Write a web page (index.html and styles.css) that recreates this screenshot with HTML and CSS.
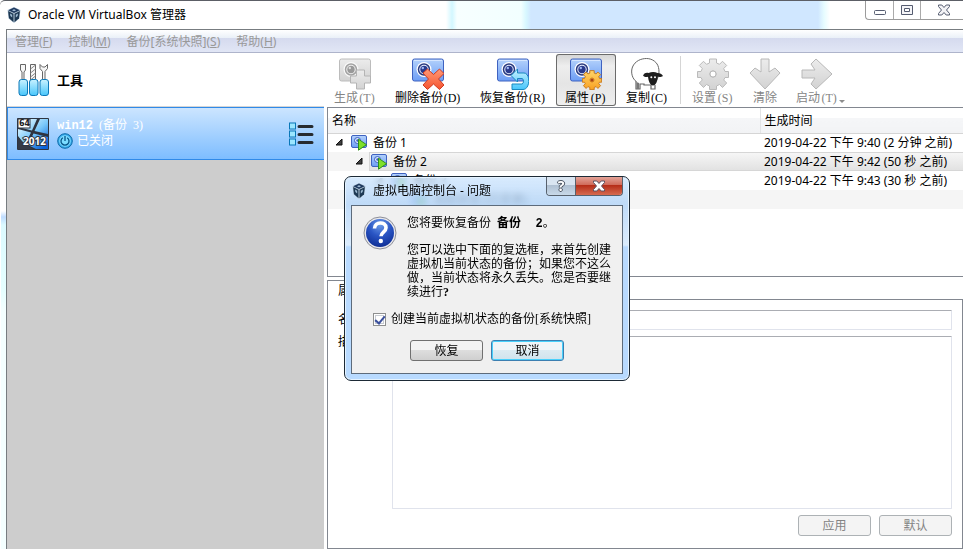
FILE: index.html
```html
<!DOCTYPE html>
<html lang="zh-CN">
<head>
<meta charset="utf-8">
<title>Oracle VM VirtualBox 管理器</title>
<link rel="stylesheet" href="styles.css">
</head>
<body>
<svg class="defs" width="0" height="0" aria-hidden="true">
  <defs>
    <linearGradient id="g-blue" x1="0" y1="0" x2="0" y2="1"><stop offset="0" stop-color="#b4d2fb"/><stop offset="1" stop-color="#6c9df5"/></linearGradient>
    <linearGradient id="g-gray" x1="0" y1="0" x2="0" y2="1"><stop offset="0" stop-color="#ececec"/><stop offset="1" stop-color="#d2d2d2"/></linearGradient>
    <linearGradient id="g-red" x1="0" y1="0" x2="0" y2="1"><stop offset="0" stop-color="#ff9a77"/><stop offset="1" stop-color="#f5532f"/></linearGradient>
    <linearGradient id="g-cyan" x1="0" y1="0" x2="0" y2="1"><stop offset="0" stop-color="#c9f2ff"/><stop offset="1" stop-color="#48c6fb"/></linearGradient>
    <linearGradient id="g-orange" x1="0" y1="0" x2="0" y2="1"><stop offset="0" stop-color="#ffd56a"/><stop offset="1" stop-color="#f9a021"/></linearGradient>
    <radialGradient id="g-help" cx=".5" cy=".2" r=".8"><stop offset="0" stop-color="#6c9be8"/><stop offset=".5" stop-color="#2a55c4"/><stop offset="1" stop-color="#0f2f96"/></radialGradient>
    <symbol id="vbox" viewBox="0 0 14 16">
      <path d="M7 0 13.500 3 12.500 11.500 7 16 1.500 11.500.5 3Z" fill="#b9cbdb"/>
      <path d="M7 .5 12.800 3.200 7 6 1.200 3.200Z" fill="#1f3a5f"/>
      <path d="M5 3.200 7 2.300l2 .9-2 1Z" fill="#a8c3da"/>
      <path d="M1.100 4 6.500 6.700v8.500L2 11.300Z" fill="#1d3853"/>
      <path d="M12.900 4 7.500 6.700v8.500l4.500-3.900Z" fill="#1d3853"/>
      <path d="m3 6.500 2.200 1.200v2.800L3.400 9Zm8 0L8.800 7.700v2.800l1.800-1.500Z" fill="#9fbcd4"/>
    </symbol>
    <symbol id="snap" viewBox="0 0 32 32">
      <rect x=".5" y="1" width="31" height="22" rx="2" fill="url(#g-blue)" stroke="#3f62c0"/>
      <path d="M2 2.500h28" stroke="#d5e6ff"/>
      <circle cx="12" cy="11.500" r="7.500" fill="#fff"/>
      <circle cx="12" cy="11.500" r="5.500" fill="#e8efff" stroke="#2b3b80" stroke-width="1.500"/>
      <circle cx="12" cy="11.500" r="3.700" fill="#2a3a8c"/>
      <circle cx="10.800" cy="10" r="1.200" fill="#9db6f2"/>
    </symbol>
    <symbol id="snap-off" viewBox="0 0 32 32">
      <rect x=".5" y="1" width="31" height="22" rx="2" fill="url(#g-gray)" stroke="#bcbcbc"/>
      <circle cx="12" cy="11.500" r="7.500" fill="#fafafa"/>
      <circle cx="12" cy="11.500" r="5.500" fill="#efefef" stroke="#a2a2a2" stroke-width="1.500"/>
      <circle cx="12" cy="11.500" r="3.700" fill="#999"/>
      <circle cx="10.800" cy="10" r="1.200" fill="#ddd"/>
    </symbol>
    <symbol id="snap-run" viewBox="0 0 16 16">
      <rect x=".5" y=".5" width="15" height="12" rx="1.500" fill="url(#g-blue)" stroke="#3f62c0"/>
      <circle cx="6.500" cy="5.500" r="3" fill="#dce8ff" stroke="#3a5fc4"/>
      <circle cx="6.500" cy="5.500" r="1.200" fill="#3a5fc4"/>
      <path d="M7.500 4.200v11L15.500 9.700Z" fill="#7ee02a" stroke="#2f8f1c"/>
    </symbol>
    <symbol id="gear" viewBox="0 0 32 32">
      <path d="M12.500 5V1h7v4l3 1.300 3-3 4.200 4.200-3 3L28 13.500h3.500v6H28L26.700 22l3 3-4.200 4.500-3-3L19.500 28v3.500h-7V28l-3-1.500-3 3L2.300 25l3-3L4 19.500H.5v-6H4l1.300-3-3-3L6.500 3.300l3 3Z"/>
      <circle cx="16" cy="16" r="3.200"/>
    </symbol>
  </defs>
</svg>

<div class="window">
  <header class="titlebar">
    <svg class="app-icon"><use href="#vbox"/></svg>
    <h1>Oracle VM VirtualBox 管理器</h1>
    <div class="window-controls">
      <button type="button" aria-label="最小化"><svg width="12" height="12"><rect x=".5" y="6.500" width="11" height="4" rx="1" fill="#fff" stroke="#555c70"/></svg></button>
      <button type="button" aria-label="最大化"><svg width="12" height="12"><path d="M.5 1.500h11v9H.5Z" fill="#f5f5f8" stroke="#555c70"/><path d="M3.500 4.500h5v3h-5Z" fill="#fff" stroke="#555c70"/></svg></button>
      <button type="button" class="wide" aria-label="关闭"><svg width="12" height="12"><path d="M.5 1h3.300L6 3.500 8.200 1h3.300v1.500L8.500 6l3 3.500V11H8.200L6 8.500 3.800 11H.5V9.500L3.500 6l-3-3.500Z" fill="#f3f3f6" stroke="#555c70"/></svg></button>
    </div>
  </header>

  <div class="client">
    <nav class="menubar">
      <button type="button" disabled>管理(<u>F</u>)</button>
      <button type="button" disabled>控制(<u>M</u>)</button>
      <button type="button" disabled>备份[系统快照](<u>S</u>)</button>
      <button type="button" disabled>帮助(<u>H</u>)</button>
    </nav>

    <div class="workspace">
      <aside class="sidebar">
        <div class="tools">
          <svg width="32" height="34" viewBox="0 0 32 34">
            <g fill="#f6f6f6" stroke="#666">
              <path d="M2.500 1.500h5v5.500l-1.500 2v8H4V9L2.500 7Z"/>
              <path d="M12.500 1.500h5V17h-5Z"/><path d="m12.500 6 5-4m-5 8 5-4m-5 8 5-4m-5 7 5-4" stroke="#888"/>
              <path d="M22 1.500v4l2.500 3V17h2.500V8.500l2.500-3v-4L27 4h-2.500Z"/>
            </g>
            <g fill="url(#g-cyan)" stroke="#0c78b8"><rect x="1" y="16.500" width="8.500" height="16" rx="2.500"/><rect x="11.500" y="16.500" width="8.500" height="16" rx="2.500"/><rect x="22" y="16.500" width="8.500" height="16" rx="2.500"/></g>
          </svg>
          <strong>工具</strong>
        </div>
        <div class="machine">
          <svg width="32" height="32" viewBox="0 0 32 32">
            <defs><linearGradient id="g-win" gradientUnits="userSpaceOnUse" x1="4" y1="4" x2="26" y2="30"><stop offset="0" stop-color="#e6f8ff"/><stop offset=".5" stop-color="#79c8fa"/><stop offset="1" stop-color="#0a62d8"/></linearGradient></defs>
            <rect width="32" height="32" rx="1" fill="#2e3440"/>
            <path d="M1 1h19l-5 11.500L1 9ZM23 1h8v15l-13.500-3ZM1 11l13 3.500L8 27 1 18ZM16.500 15.500 31 19v12H19l-8-4Z" fill="url(#g-win)"/>
            <path d="M1 19c3 4 8 8 15 12H1Z" fill="#343a46"/>
            <rect x="1" y="1" width="12" height="9" fill="#fff" stroke="#2e3440"/>
            <text x="2" y="8" class="bits">64</text>
            <text x="6" y="27" class="year">2012</text>
          </svg>
          <div class="machine-info">
            <div><strong>win12</strong>&nbsp; (备份&nbsp; 3)</div>
            <div class="state">
              <svg width="16" height="16" viewBox="0 0 16 16"><circle cx="8" cy="8" r="7.300" fill="#38a9ea" stroke="#0c6ca8"/><circle cx="8" cy="8" r="5.800" fill="#7bdcff"/><path d="M5.800 4.800a4 4 0 1 0 4.400 0M8 3v5" fill="none" stroke="#075488" stroke-width="1.300"/></svg>
              <span>已关闭</span>
            </div>
          </div>
          <button type="button" class="list-button" aria-label="菜单">
            <svg width="25" height="24" viewBox="0 0 25 24"><g fill="#9be6ff" stroke="#0877b8"><rect x=".5" y="1" width="6" height="6"/><rect x=".5" y="9" width="6" height="6"/><rect x=".5" y="17" width="6" height="6"/></g><path d="M10 4.500h13M10 12.500h13M10 20.500h13" stroke="#262b30" stroke-width="3" stroke-linecap="round"/></svg>
          </button>
        </div>
      </aside>

      <main class="content">
        <div class="toolbar">
          <button type="button" disabled><svg class="icon"><use href="#snap-off"/><path d="M17.500 12h8v6h6v7h-6v6h-8v-6h-6v-7h6Z" fill="url(#g-gray)" stroke="#b4b4b4"/></svg><span>生成<span class="key">(T)</span></span></button>
          <button type="button"><svg class="icon"><use href="#snap"/><path d="m11 15 4.500-4 6 5.500 6-5.500L32 15.500 26.500 21l5.500 6-4.500 4.500-6-5.500-6 5.500L11 27l5.500-6Z" fill="url(#g-red)" stroke="#cf3b20"/></svg><span>删除备份<span class="key">(D)</span></span></button>
          <button type="button"><svg class="icon"><use href="#snap"/><path d="M14 17.500 20.500 11v4H27c6.500 0 6.500 16.500-1 16.500H15V26h10c2 0 2-5.500 0-5.500h-4.500V24Z" fill="url(#g-cyan)" stroke="#1889c0"/></svg><span>恢复备份<span class="key">(R)</span></span></button>
          <button type="button" class="pressed"><svg class="icon"><use href="#snap"/><use href="#gear" x="12" y="12" width="20" height="20" fill="url(#g-orange)" stroke="#c8781a" stroke-width="1.500"/><circle cx="22" cy="22" r="1.500" fill="#a94018"/></svg><span>属性<span class="key">(P)</span></span></button>
          <button type="button"><svg class="icon" viewBox="0 0 32 32"><path d="M6 24C1 21-.5 14 1.500 9 4 3 10 .5 15.500.5c6 0 11 4 12 9 1.500 6-.5 12-4.500 15.500" fill="#fff" stroke="#666"/><path d="M5 23v8h4v-5h4v1h7v4h4v-4" fill="#fff" stroke="#666" stroke-width="1.200"/><path d="M5.500 24v7H8v-6Z" fill="#777"/><path d="M12 17.500c1.500-2.500 3-3 5.500-2.500 3-1.500 6.500-1.500 9 0 2.500 0 4.500 1 5.500 3-2 1.200-3.500 1-5.200.8C26.500 23 25 27.500 22 27.500s-4.500-4.500-5-8.700c-2 .7-3.500.2-5-1.300Z" fill="#1f1f1f"/><circle cx="20.300" cy="19.300" r="1" fill="#fff"/><circle cx="24" cy="19.300" r="1" fill="#fff"/></svg><span>复制<span class="key">(C)</span></span></button>
          <hr>
          <button type="button" disabled><svg class="icon"><use href="#gear" fill="url(#g-gray)" stroke="#bababa"/><circle cx="16" cy="16" r="3" fill="#fff" stroke="#bababa"/></svg><span>设置<span class="key">(S)</span></span></button>
          <button type="button" class="compact" disabled><svg class="icon"><path d="M12 1h8v13l6-4 5 5-15 16L1 15l5-5 6 4Z" fill="url(#g-gray)" stroke="#b8b8b8"/></svg><span>清除</span></button>
          <button type="button" class="drop" disabled><svg class="icon"><path d="M1 12h13l-4-6 5-5 16 15-16 15-5-5 4-6H1Z" fill="url(#g-gray)" stroke="#b8b8b8"/></svg><span>启动<span class="key">(T)</span></span></button>
        </div>

        <div class="tree">
          <table>
            <thead><tr><th scope="col">名称</th><th scope="col" class="time">生成时间</th></tr></thead>
            <tbody>
              <tr><td><div class="node"><svg class="arrow"><path d="M7 0v6H1Z"/></svg><svg class="node-icon"><use href="#snap-run"/></svg>备份 1</div></td><td>2019-04-22 下午 9:40 (2 分钟 之前)</td></tr>
              <tr class="selected"><td><div class="node level-2"><svg class="arrow"><path d="M7 0v6H1Z"/></svg><svg class="node-icon"><use href="#snap-run"/></svg>备份 2</div></td><td>2019-04-22 下午 9:42 (50 秒 之前)</td></tr>
              <tr><td><div class="node level-3"><svg class="arrow"><path d="M7 0v6H1Z"/></svg><svg class="node-icon"><use href="#snap-run"/></svg>备份 3</div></td><td>2019-04-22 下午 9:43 (30 秒 之前)</td></tr>
              <tr class="alternate"><td><div class="node level-4"><svg class="node-icon"><use href="#snap-run"/></svg>当前状态 (已变更)</div></td><td></td></tr>
            </tbody>
          </table>
        </div>

        <section class="details">
          <div class="tabs"><button type="button" class="tab">属性(I)</button></div>
          <form class="pane">
            <label for="name">名称(N):</label>
            <input id="name" type="text">
            <label for="description">描述(D):</label>
            <textarea id="description"></textarea>
            <div class="pane-actions">
              <button type="button" disabled>应用</button>
              <button type="button" disabled>默认</button>
            </div>
          </form>
        </section>
      </main>
    </div>
  </div>
</div>

<div class="dialog" role="dialog" aria-labelledby="dialog-title">
  <div class="dialog-title">
    <svg class="app-icon"><use href="#vbox"/></svg>
    <h2 id="dialog-title">虚拟电脑控制台 - 问题</h2>
    <div class="dialog-controls">
      <button type="button">?</button>
      <button type="button" class="close" aria-label="关闭"><svg width="12" height="12"><path d="M.5 1h3.300L6 3.500 8.200 1h3.300v1.500L8.500 6l3 3.500V11H8.200L6 8.500 3.800 11H.5V9.500L3.500 6l-3-3.500Z" fill="#fff" stroke="#5b5362"/></svg></button>
    </div>
  </div>
  <div class="dialog-body">
    <div class="message">
      <svg width="34" height="34" viewBox="0 0 34 34"><circle cx="17" cy="17" r="16" fill="#e8e8ec" stroke="#8d8f98"/><circle cx="17" cy="17" r="14" fill="url(#g-help)"/><path d="M11.500 12.500c0-7 11.500-7.500 11.500-.8 0 4.300-5 4.300-5 8.500" fill="none" stroke="#fff" stroke-width="3.600"/><circle cx="17.800" cy="25" r="2.200" fill="#fff"/></svg>
      <div class="message-text">
        <p>您将要恢复备份 <strong>备份&nbsp; 2</strong>。</p>
        <p>您可以选中下面的复选框，来首先创建虚拟机当前状态的备份；如果您不这么做，当前状态将永久丢失。您是否要继续进行<b>?</b></p>
      </div>
    </div>
    <div class="check"><input id="snapshot" type="checkbox" checked><label for="snapshot">创建当前虚拟机状态的备份[系统快照]</label></div>
    <div class="dialog-actions">
      <button type="button">恢复</button>
      <button type="button" class="default">取消</button>
    </div>
  </div>
</div>
</body>
</html>
```
FILE: styles.css
```css
* { box-sizing: border-box; }

body {
  margin: 0;
  overflow: hidden;
  background: #fff;
  color: #000;
  font: 12px/16px "Noto Sans", "Noto Sans CJK SC", sans-serif;
}

button, input, textarea { font: inherit; color: inherit; margin: 0; }
button { padding: 0; border: 0; background: none; }
h1, h2, p { margin: 0; font-size: 12px; font-weight: 400; }
svg { display: block; flex: none; }
.defs { position: absolute; }
.app-icon { width: 14px; height: 16px; }

.window {
  display: flex;
  flex-direction: column;
  height: 100vh;
  padding-left: 6px;
  border-top: 1px solid #5c5f66;
  border-top-left-radius: 5px;
  background: linear-gradient(#fff 210px, #bfdcff 216px, #dcfaff 224px, #e6ffff 290px, #f4ffff 310px) 1px 0 / 5px 100% no-repeat;
}

/* Title bar with the glass showing the windows behind it */
.titlebar {
  display: flex;
  align-items: center;
  gap: 7px;
  flex: none;
  height: 28px;
  padding-left: 1px;
  background: linear-gradient(90deg, #fff 440px, #d2f7ff 446px, #f7ffff 451px, #f2ffff 515px, #d8f8ff 520px, #d0e7ff 525px, #d0e7ff 812px, #e6fcff 818px, #fff 824px);
}

.window-controls {
  display: flex;
  align-self: flex-start;
  margin-left: auto;
  height: 19px;
  border: solid #9b9b9b;
  border-width: 0 0 1px 1px;
  border-bottom-left-radius: 4px;
}
.window-controls button { display: grid; place-items: center; width: 27px; }
.window-controls button + button { border-left: 1px solid #aaa; }
.window-controls .wide { width: 43px; padding-left: 4px; }

.client {
  display: flex;
  flex-direction: column;
  flex: 1;
  min-height: 0;
  border: solid #777c80;
  border-width: 1px 0 0 1px;
}

.menubar {
  display: flex;
  gap: 16px;
  flex: none;
  height: 23px;
  padding: 2px 8px 0;
  border-bottom: 1px solid #aeb4cb;
  background: linear-gradient(#fff, #eaf0f8 8px, #d5daee 8px, #e1e6f5);
}
.menubar button { color: #999; }

.workspace { display: flex; flex: 1; min-height: 0; }

.sidebar { width: 317px; flex: none; background: #cdcdcd; }

.tools {
  display: flex;
  align-items: center;
  gap: 7px;
  height: 54px;
  padding-left: 11px;
  border-bottom: 1px solid #d5d5d5;
  background: #fff;
  font-size: 13px;
}

.machine {
  display: flex;
  align-items: center;
  gap: 8px;
  height: 53px;
  padding: 0 10px 0 9px;
  border: 1px solid #308ae8;
  border-right: 0;
  background: linear-gradient(#cce5ff, #7dbdff);
  color: #fff;
}
.machine-info { font-family: "Liberation Serif", "Noto Sans CJK SC", serif; line-height: 14px; }
.machine-info strong { font-family: "Liberation Mono", monospace; }
.state { display: flex; align-items: center; gap: 4px; }
.list-button { margin-left: auto; }
.bits { font: bold 8px "DejaVu Sans", sans-serif; fill: #222; }
.year { font: bold 10px "Noto Sans", sans-serif; fill: #fff; stroke: #2e3440; stroke-width: 2px; paint-order: stroke; }

.content { display: flex; flex-direction: column; flex: 1; min-width: 0; }

.toolbar { display: flex; gap: 1px; flex: none; height: 54px; padding: 1px; }
.toolbar button {
  display: flex;
  flex-direction: column;
  align-items: center;
  flex: none;
  padding: 4px 9px 0;
  border-radius: 3px;
  font-family: "Liberation Serif", "Noto Sans CJK SC", serif;
  white-space: nowrap;
}
.toolbar button:disabled { color: #858585; }
.toolbar .compact { padding: 4px 5px 0; }
.toolbar .pressed {
  background: linear-gradient(#d4d4d4, #eee 12px, #e5e5e5 30px, #efefef);
  box-shadow: inset 0 0 0 1px #6b6b6b;
}
.toolbar .drop { position: relative; }
.toolbar .drop::after {
  content: "";
  position: absolute;
  right: 2px;
  bottom: 3px;
  border: 3px solid transparent;
  border-top-color: #8d8d8d;
  border-bottom: 0;
}
.toolbar hr { margin: 2px 1px 2px 2px; border: 0; border-left: 1px solid #d5d5d5; }
.icon { width: 32px; height: 32px; }
.key { display: inline-block; width: 18px; text-align: center; }

.tree {
  flex: none;
  height: 170px;
  margin-left: 3px;
  border: solid #828790;
  border-width: 1px 0 1px 1px;
}
table { width: 100%; border-collapse: collapse; table-layout: fixed; }
th {
  height: 25px;
  padding: 2px 4px 0;
  border-bottom: 1px solid #d5d5d5;
  background: linear-gradient(#fff 10px, #f5f6f8 10px, #f2f3f5);
  font-weight: 400;
  text-align: left;
}
.time { width: 203px; border-left: 1px solid #e2e3e5; }
td { height: 19px; padding: 0 0 0 4px; line-height: 17px; white-space: nowrap; }
td:first-child { padding: 0; }
.selected td { background: linear-gradient(#d6d6d6 1px, #f6f6f6 1px, #e2e2e2 18px, #d6d6d6 18px); }
.selected td:first-child { background: linear-gradient(90deg, #f5f5f5 41px, #d6d6d6 41px, #d6d6d6 42px, transparent 42px), linear-gradient(#d6d6d6 1px, #f6f6f6 1px, #e2e2e2 18px, #d6d6d6 18px); }
.alternate { background: #f5f5f5; }
.node { display: flex; align-items: center; padding-left: 7px; }
.level-2 { padding-left: 27px; }
.level-3 { padding-left: 47px; }
.level-4 { padding-left: 83px; }
.arrow { width: 8px; height: 7px; margin-right: 8px; fill: #404040; stroke: #111; }
.node-icon { width: 16px; height: 16px; margin-right: 6px; }

.details { display: flex; flex-direction: column; flex: 1; min-height: 0; margin: 3px 0 0 3px; }
.tabs { display: flex; height: 20px; z-index: 1; }
.tab { width: 64px; padding-left: 10px; border: 1px solid #828790; border-bottom: 0; background: #fff; text-align: left; }
.pane {
  display: grid;
  grid-template-columns: 54px 1fr;
  grid-template-rows: 20px 1fr 21px;
  gap: 6px 0;
  flex: 1;
  min-height: 0;
  margin-top: -1px;
  padding: 10px 10px 12px;
  border: 1px solid #828790;
}
.pane label { padding-top: 2px; }
.pane label[for="description"] { padding: 0; line-height: 12px; }
.pane input, .pane textarea {
  width: 100%;
  min-height: 0;
  padding: 2px 4px;
  border: 1px solid #e0e3ec;
  border-top-color: #abadb3;
  border-radius: 1px;
  background: #fff;
  resize: none;
}
.pane-actions { grid-column: 1 / -1; display: flex; justify-content: flex-end; gap: 8px; }
.pane-actions button, .dialog-actions button { width: 73px; height: 21px; border: 1px solid #adb2b5; border-radius: 3px; background: #f4f4f4; }
.pane-actions button { color: #838383; }

.dialog {
  position: absolute;
  z-index: 2;
  left: 344px;
  top: 176px;
  width: 286px;
  padding: 0 6px 6px;
  border: 1px solid #1d2a36;
  border-radius: 7px;
  background: linear-gradient(rgba(205, 229, 253, .78), rgba(178, 212, 248, .82) 28px, rgba(215, 234, 253, .9) 68px, #b8daff 70px);
  box-shadow: inset 0 0 0 1px #e5f3ff;
  backdrop-filter: blur(3px);
}
.dialog-title { display: flex; align-items: center; gap: 7px; height: 28px; padding-left: 1px; }
.dialog-controls {
  display: flex;
  align-self: flex-start;
  margin-left: auto;
  height: 19px;
  border: 1px solid #57616d;
  border-top: 0;
  border-radius: 0 0 4px 4px;
  overflow: hidden;
}
.dialog-controls button {
  display: grid;
  place-items: center;
  width: 28px;
  background: linear-gradient(#d9e5f1 8px, #aebfd1 8px, #c8d9e9);
  color: #fff;
  font-weight: 700;
  font-size: 14px;
  text-shadow: 0 1px #4b5563, 1px 0 #4b5563, -1px 0 #4b5563, 0 -1px #4b5563;
}
.dialog-controls .close { width: 47px; border-left: 1px solid #57616d; background: linear-gradient(#e3a398, #cf6a59 8px, #b42b16 8px, #d66b50); }

.dialog-body {
  padding: 10px 11px 12px;
  border: 1px solid #5d6b7b;
  background: #f0f0f0;
  font-family: "Liberation Serif", "Noto Sans CJK SC", serif;
}
.message { display: flex; gap: 10px; line-height: 14px; }
.message-text { flex: 1; margin-right: -2px; }
.message-text p + p { margin-top: 12px; }
.message-text strong { font-family: "Liberation Mono", "Noto Sans CJK SC", monospace; margin-left: 3px; }
.check { display: flex; align-items: center; gap: 5px; margin: 12px 10px 13px; }
.check input {
  display: grid;
  place-items: center;
  appearance: none;
  width: 13px;
  height: 13px;
  border: 1px solid #8e8f8f;
  background: #fff;
  box-shadow: inset 0 0 0 1px #fff, inset 0 0 0 2px #c8ccd2;
}
.check input:checked::before {
  content: "";
  width: 4px;
  height: 8px;
  border: solid #3a4f9c;
  border-width: 0 2px 2px 0;
  rotate: 40deg;
}
.dialog-actions { display: flex; justify-content: center; gap: 8px; }
.dialog-actions button { border-color: #707070; background: linear-gradient(#f3f3f3 9px, #dedede 9px, #cfcfcf); }
.dialog-actions .default {
  border-color: #3c7fb1;
  background: linear-gradient(#f0f5f8 9px, #dcebf2 9px, #cfe3ed);
  box-shadow: inset 0 0 0 1px #48d0fb;
}
```
